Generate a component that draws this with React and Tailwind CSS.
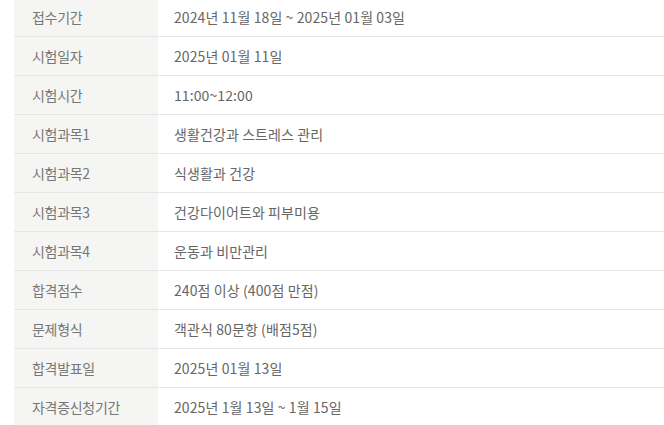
const rows = [
  ['접수기간', '2024년 11월 18일 ~ 2025년 01월 03일'],
  ['시험일자', '2025년 01월 11일'],
  ['시험시간', '11:00~12:00'],
  ['시험과목1', '생활건강과 스트레스 관리'],
  ['시험과목2', '식생활과 건강'],
  ['시험과목3', '건강다이어트와 피부미용'],
  ['시험과목4', '운동과 비만관리'],
  ['합격점수', '240점 이상 (400점 만점)'],
  ['문제형식', '객관식 80문항 (배점5점)'],
  ['합격발표일', '2025년 01월 13일'],
  ['자격증신청기간', '2025년 1월 13일 ~ 1월 15일'],
];

const App = () => {
  return (
    <div className="h-[425px] overflow-hidden bg-white pl-[14px]" style={{ fontFamily: '"Noto Sans CJK KR", "Noto Sans", sans-serif' }}>
      <div className="-mt-[2px]">
        {rows.map(([label, value]) => (
          <div key={label} className="flex h-[39px] border-b border-[#e6e6e6] text-[14px]">
            <div className="flex w-[144px] items-center bg-[#f5f5f3] pl-[18px] tracking-[-0.3px] text-[#777]">{label}</div>
            <div className="flex flex-1 items-center pl-[16px] tracking-[0.1px] text-[#666]">{value}</div>
          </div>
        ))}
      </div>
    </div>
  );
};

export default App;
